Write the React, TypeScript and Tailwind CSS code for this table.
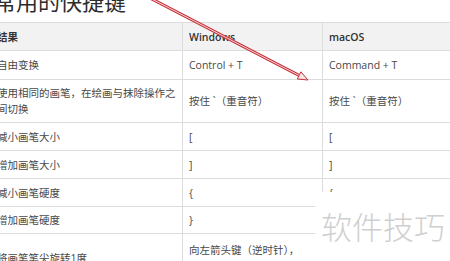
const rows: { action: string; win: string; mac: string; h: string }[] = [
  { action: '自由变换', win: 'Control + T', mac: 'Command + T', h: 'h-[29px]' },
  {
    action: '使用相同的画笔，在绘画与抹除操作之间切换',
    win: '按住 `（重音符）',
    mac: '按住 `（重音符）',
    h: 'h-[43px]',
  },
  { action: '减小画笔大小', win: '[', mac: '[', h: 'h-[28px]' },
  { action: '增加画笔大小', win: ']', mac: ']', h: 'h-[28px]' },
  { action: '减小画笔硬度', win: '{', mac: '{', h: 'h-[28px]' },
  { action: '增加画笔硬度', win: '}', mac: '}', h: 'h-[27px]' },
];

const App = () => {
  return (
    <div className="relative h-[261px] w-[450px] overflow-hidden bg-white font-['Open_Sans','Noto_Sans_CJK_SC',sans-serif] text-[#484848]">
      {/* Page heading */}
      <h2 className="ml-[-6px] mt-[-13px] text-[22px] leading-[28px] font-normal text-[#2c2c2c]">常用的快捷键</h2>

      {/* Shortcut table */}
      <div className="ml-[-10px] mt-[7px] w-[540px] border-t border-[#dcdcdc] text-[10.5px] leading-[16px]">
        <div className="grid h-[28px] grid-cols-[193px_140px_1fr] border-b border-[#dcdcdc] bg-[#f2f2f2] font-semibold text-[#333]">
          <div className="flex items-center border-r border-[#dcdcdc] px-[7px]">结果</div>
          <div className="flex items-center border-r border-[#dcdcdc] px-[6px]">Windows</div>
          <div className="flex items-center px-[6px]">macOS</div>
        </div>

        {rows.map((r) => (
          <div key={r.action} className={`grid grid-cols-[193px_140px_1fr] border-b border-[#dcdcdc] ${r.h}`}>
            <div className="flex items-center border-r border-[#dcdcdc] pl-[7px] pr-[3px]">{r.action}</div>
            <div className="flex items-center border-r border-[#dcdcdc] px-[6px]">{r.win}</div>
            <div className="flex items-center px-[6px]">{r.mac}</div>
          </div>
        ))}

        <div className="grid grid-cols-[193px_140px_1fr]">
          <div className="flex items-center border-r border-[#dcdcdc] pl-[7px]">将画笔笔尖旋转1度</div>
          <div className="border-r border-[#dcdcdc] px-[6px] py-[8px]">
            向左箭头键（逆时针），
            <br />
            向右箭头键（顺时针）
          </div>
          <div className="px-[6px] py-[8px]" />
        </div>
      </div>

      {/* Watermark */}
      <div className="absolute bottom-0 left-[315px] right-0 top-[192px] bg-white">
        <div className="ml-[6px] mt-[16px] whitespace-nowrap font-['Noto_Sans_CJK_SC',sans-serif] text-[31px] leading-[36px] font-light text-[#cfcfcf]">
          软件技巧
        </div>
      </div>

      {/* Red annotation arrow */}
      <svg className="pointer-events-none absolute inset-0" width="450" height="261" viewBox="0 0 450 261">
        <line x1="148" y1="-3" x2="299" y2="75.4" stroke="#c8323c" strokeWidth="3" />
        <line x1="148" y1="-3" x2="299" y2="75.4" stroke="#f6d6d8" strokeWidth="1" />
        <polygon points="308,80 297.3,79 300.9,71.8" fill="#f9e3e4" stroke="#c8323c" strokeWidth="1" />
      </svg>
    </div>
  );
};

export default App;
